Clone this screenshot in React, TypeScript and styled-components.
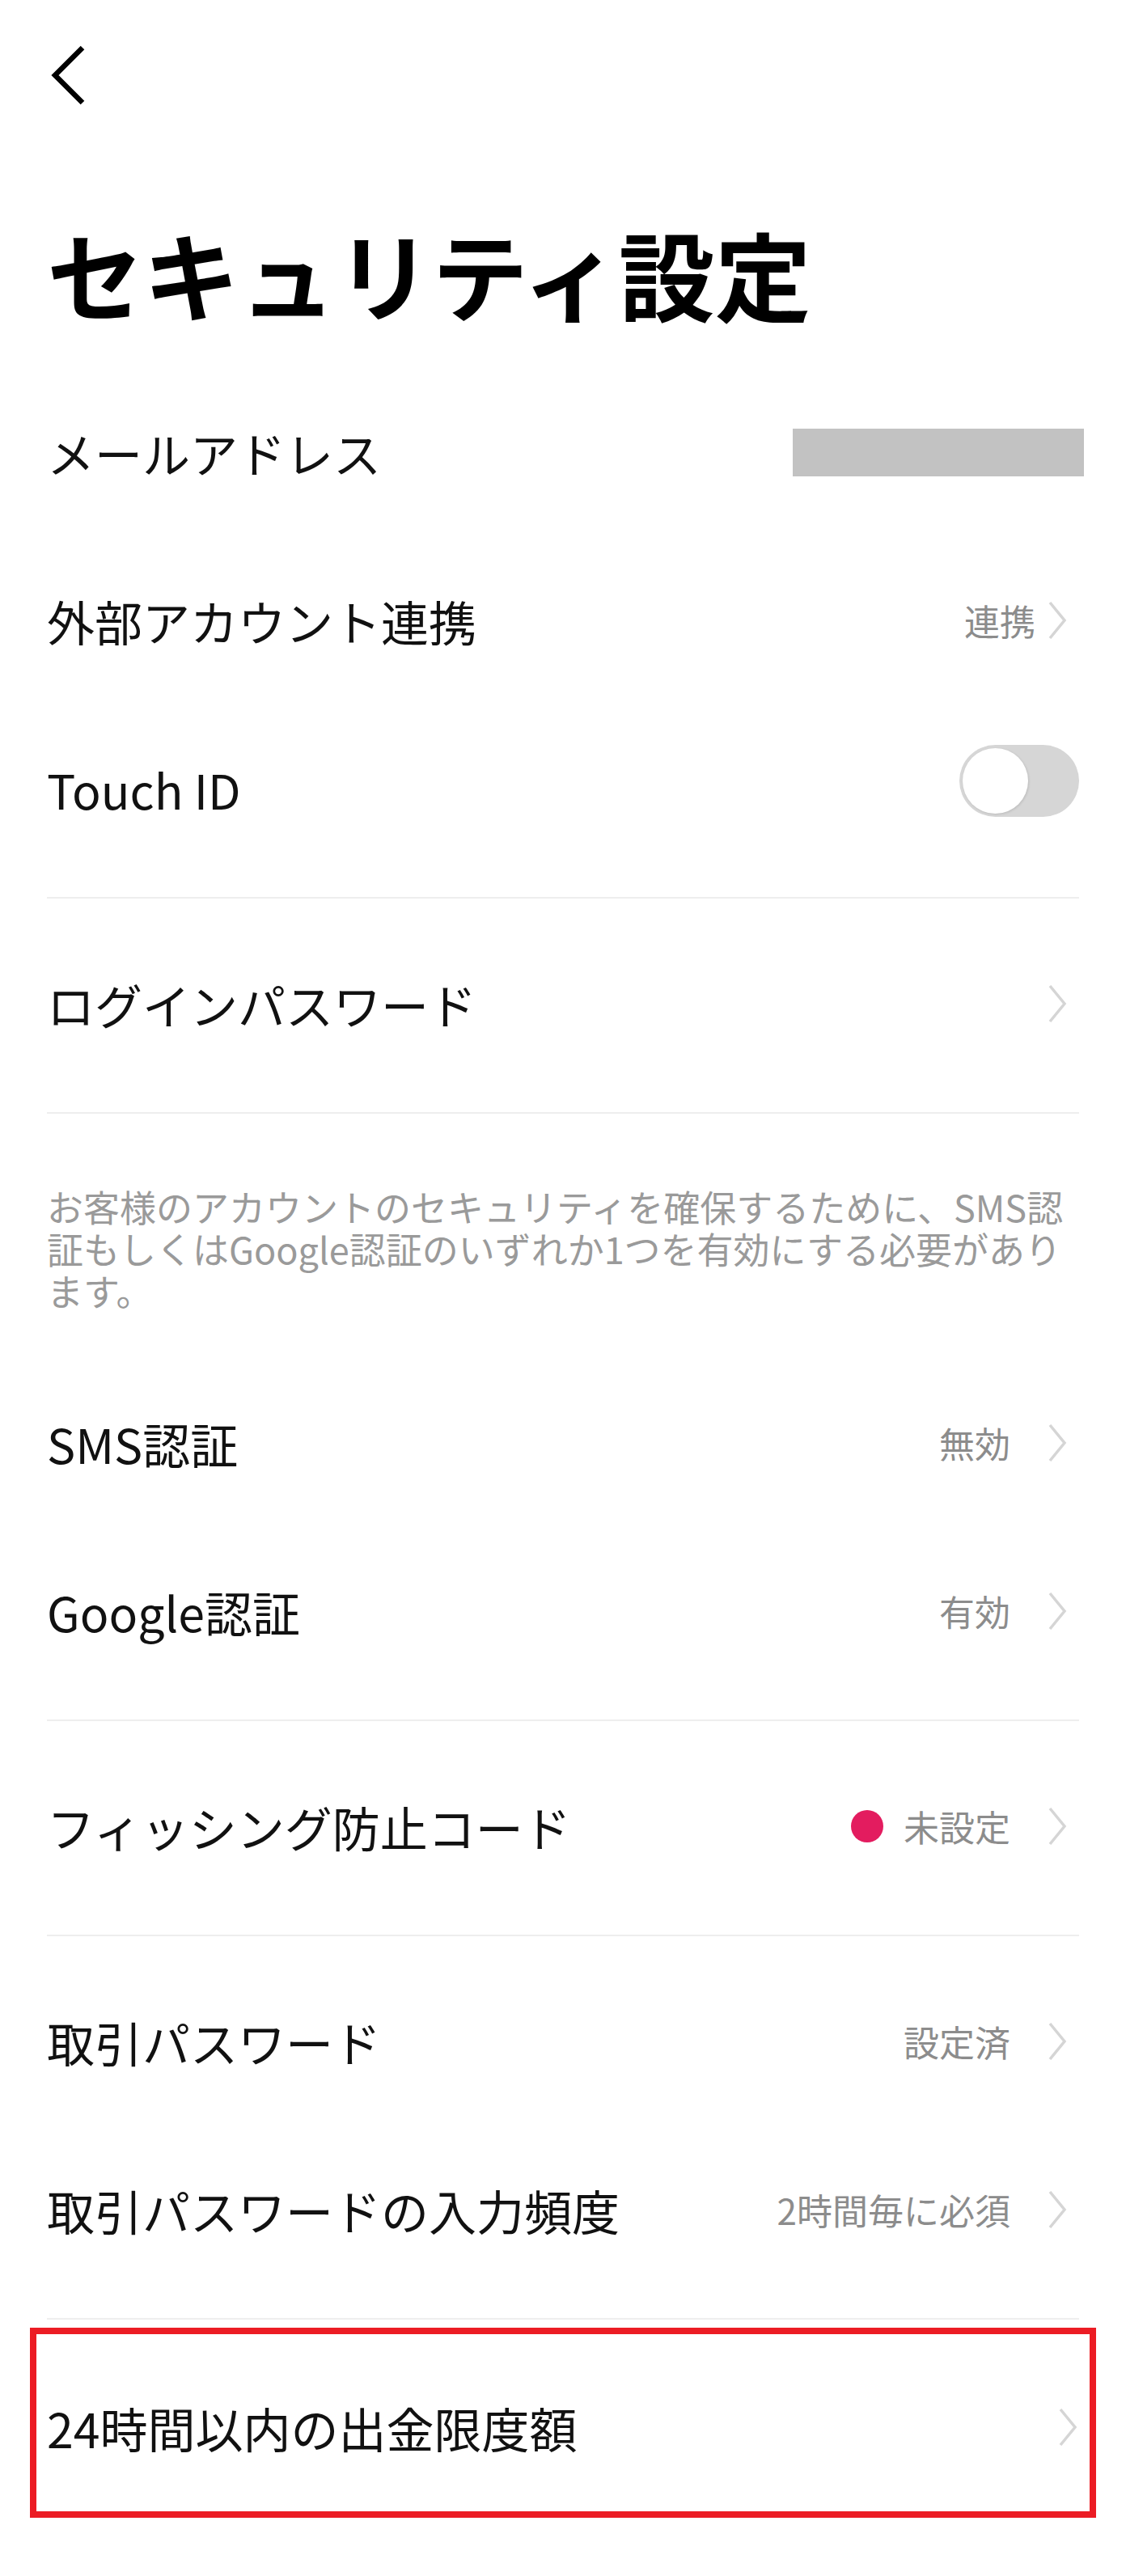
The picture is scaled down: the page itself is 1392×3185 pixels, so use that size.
import React from "react";
import styled, { createGlobalStyle } from "styled-components";

const GlobalStyle = createGlobalStyle`
  html, body {
    margin: 0;
    padding: 0;
    background: #ffffff;
  }
  body {
    font-family: "Noto Sans CJK JP", "Noto Sans", sans-serif;
    color: #000;
  }
  * { box-sizing: border-box; }
`;

const Page = styled.div`
  width: 1392px;
  min-height: 3185px;
  padding: 0 58px;
  background: #fff;
`;

const Header = styled.header`
  height: 186px;
  display: flex;
  align-items: center;
`;

const BackButton = styled.button`
  border: none;
  background: none;
  padding: 0;
  margin: 0;
  display: flex;
  align-items: center;
  cursor: pointer;
`;

const Title = styled.h1`
  margin: 82px 0 22px;
  font-size: 119px;
  line-height: 139px;
  font-weight: 700;
  color: #000;
  letter-spacing: 0;
`;

const Section = styled.section<{ $divider?: boolean }>`
  padding: 26px 0 30px;
  border-bottom: ${(p) => (p.$divider === false ? "none" : "2px solid #eeeeee")};
`;

const Row = styled.div`
  height: 208px;
  display: flex;
  align-items: center;
  justify-content: space-between;
`;

const Label = styled.span`
  font-size: 59px;
  line-height: 1;
  font-weight: 400;
  color: #111;
  white-space: nowrap;
`;

const Trail = styled.div`
  display: flex;
  align-items: center;
`;

const Value = styled.span`
  font-size: 44px;
  line-height: 1;
  color: #8c8c8c;
  white-space: nowrap;
`;

const ChevronWrap = styled.span<{ $gap: number }>`
  display: flex;
  align-items: center;
  margin-left: ${(p) => p.$gap}px;
  margin-right: 15px;
`;

const MaskedEmail = styled.div`
  width: 360px;
  height: 59px;
  background: #c2c2c2;
  margin-right: -6px;
`;

const Toggle = styled.div`
  position: relative;
  width: 148px;
  height: 89px;
  border-radius: 45px;
  background: #d6d6d6;
  margin-bottom: 20px;
`;

const Knob = styled.span`
  position: absolute;
  top: 4px;
  left: 4px;
  width: 81px;
  height: 81px;
  border-radius: 50%;
  background: #fff;
  box-shadow: 1px 1px 3px rgba(0, 0, 0, 0.12);
`;

const Dot = styled.span`
  width: 40px;
  height: 40px;
  border-radius: 50%;
  background: #e31c5f;
  margin-right: 25px;
`;

const Note = styled.p`
  margin: 89px 0 32px;
  font-size: 45px;
  line-height: 52px;
  color: #9a9a9a;
`;

const Highlight = styled.div`
  margin: 10px -21px 0;
  border: 8px solid #ec1c24;
  padding: 11px 0 0 13px;
`;

const Chevron = () => (
  <svg width="24" height="48" viewBox="0 0 24 48" fill="none">
    <polyline
      points="3,2 21,24 3,46"
      stroke="#d5d5d5"
      strokeWidth="3.5"
      fill="none"
    />
  </svg>
);

const BackIcon = () => (
  <svg width="52" height="76" viewBox="0 0 52 76" fill="none">
    <polyline
      points="44,4 10,38 44,72"
      stroke="#000"
      strokeWidth="6.5"
      fill="none"
    />
  </svg>
);

type NavRowProps = {
  label: string;
  value?: string;
  dot?: boolean;
  gap?: number;
};

const NavRow = ({ label, value, dot, gap = 46 }: NavRowProps) => (
  <Row>
    <Label>{label}</Label>
    <Trail>
      {dot && <Dot />}
      {value && <Value>{value}</Value>}
      <ChevronWrap $gap={value ? gap : 0}>
        <Chevron />
      </ChevronWrap>
    </Trail>
  </Row>
);

export default function App() {
  return (
    <>
      <GlobalStyle />
      <Page>
        <Header>
          <BackButton aria-label="戻る">
            <BackIcon />
          </BackButton>
        </Header>
        <Title>セキュリティ設定</Title>

        <Section>
          <Row>
            <Label>メールアドレス</Label>
            <MaskedEmail />
          </Row>
          <NavRow label="外部アカウント連携" value="連携" gap={15} />
          <Row>
            <Label>Touch ID</Label>
            <Toggle>
              <Knob />
            </Toggle>
          </Row>
        </Section>

        <Section>
          <NavRow label="ログインパスワード" />
        </Section>

        <Note>
          お客様のアカウントのセキュリティを確保するために、SMS認証もしくはGoogle認証のいずれか1つを有効にする必要があります。
        </Note>

        <Section>
          <NavRow label="SMS認証" value="無効" />
          <NavRow label="Google認証" value="有効" />
        </Section>

        <Section>
          <NavRow label="フィッシング防止コード" value="未設定" dot />
        </Section>

        <Section>
          <NavRow label="取引パスワード" value="設定済" />
          <NavRow label="取引パスワードの入力頻度" value="2時間毎に必須" />
        </Section>

        <Highlight>
          <NavRow label="24時間以内の出金限度額" />
        </Highlight>
      </Page>
    </>
  );
}
